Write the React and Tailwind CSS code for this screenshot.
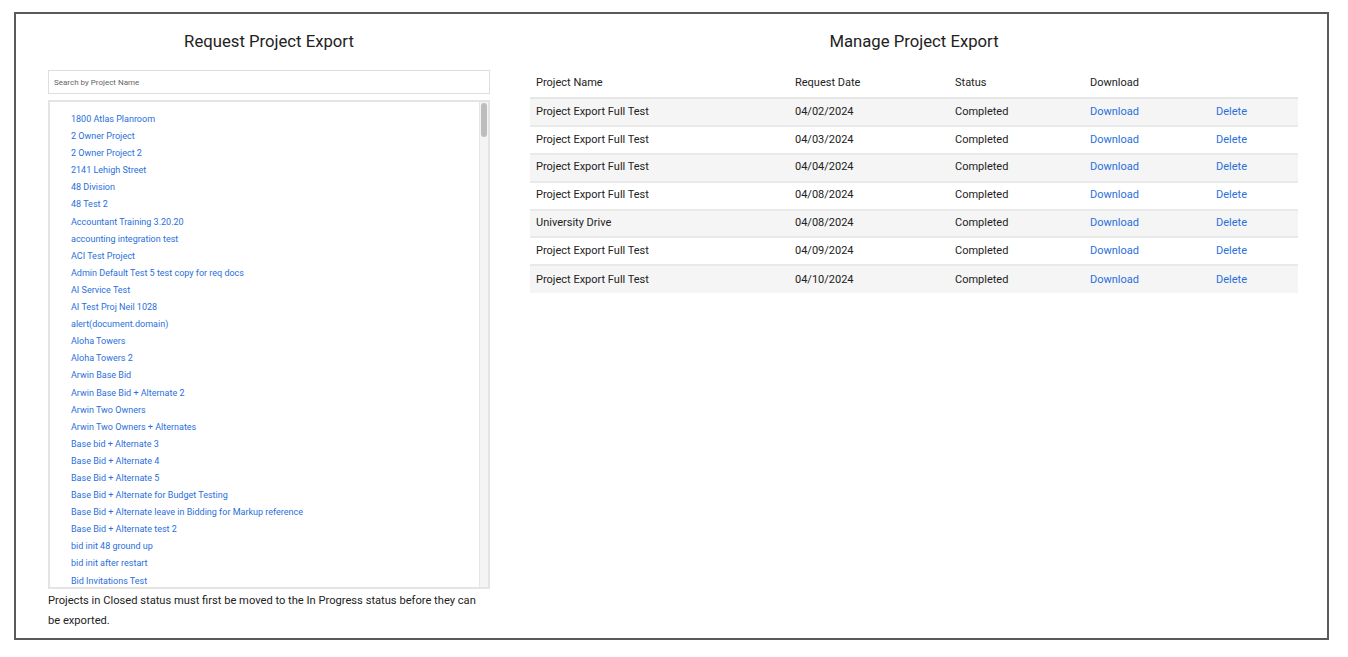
const projects = [
	'1800 Atlas Planroom',
	'2 Owner Project',
	'2 Owner Project 2',
	'2141 Lehigh Street',
	'48 Division',
	'48 Test 2',
	'Accountant Training 3.20.20',
	'accounting integration test',
	'ACI Test Project',
	'Admin Default Test 5 test copy for req docs',
	'AI Service Test',
	'AI Test Proj Neil 1028',
	'alert(document.domain)',
	'Aloha Towers',
	'Aloha Towers 2',
	'Arwin Base Bid',
	'Arwin Base Bid + Alternate 2',
	'Arwin Two Owners',
	'Arwin Two Owners + Alternates',
	'Base bid + Alternate 3',
	'Base Bid + Alternate 4',
	'Base Bid + Alternate 5',
	'Base Bid + Alternate for Budget Testing',
	'Base Bid + Alternate leave in Bidding for Markup reference',
	'Base Bid + Alternate test 2',
	'bid init 48 ground up',
	'bid init after restart',
	'Bid Invitations Test',
	'Bid Package Test',
	'Bidding Test'
];

const exportsList = [
	{ name: 'Project Export Full Test', date: '04/02/2024' },
	{ name: 'Project Export Full Test', date: '04/03/2024' },
	{ name: 'Project Export Full Test', date: '04/04/2024' },
	{ name: 'Project Export Full Test', date: '04/08/2024' },
	{ name: 'University Drive', date: '04/08/2024' },
	{ name: 'Project Export Full Test', date: '04/09/2024' },
	{ name: 'Project Export Full Test', date: '04/10/2024' }
];

function RequestExport() {
	return (
		<div className="w-[442px] shrink-0">
			<h2 className="text-center text-[16.7px] text-[#222] leading-[24px] mt-[16px] mb-[16px]">Request Project Export</h2>
			<input
				type="text"
				placeholder="Search by Project Name"
				className="block w-full h-[24px] border border-[#dedede] px-[5px] text-[8px] text-[#555] placeholder:text-[#666] outline-none"
			/>
			<div className="mt-[6px] h-[489px] border-2 border-[#e4e4e4] flex">
				<ul className="flex-1 overflow-hidden pl-[21px] pt-[9px]">
					{projects.map((p, i) => (
						<li key={i} className="text-[9px] leading-[17.1px] text-[#2a6fdb]">{p}</li>
					))}
				</ul>
				<div className="w-[9px] bg-[#f4f4f4] border-l border-[#e6e6e6] pt-[1px] flex justify-center">
					<div className="w-[6px] h-[34px] rounded-[3px] bg-[#bdbdbd]"></div>
				</div>
			</div>
			<p className="text-[11.15px] leading-[20px] text-[#222] mt-[2px] pr-[10px]">
				Projects in Closed status must first be moved to the In Progress status before they can be exported.
			</p>
		</div>
	);
}

function ManageExport() {
	return (
		<div className="w-[768px] shrink-0">
			<h2 className="text-center text-[16.7px] text-[#222] leading-[24px] mt-[16px] mb-[16px]">Manage Project Export</h2>
			<table className="w-full text-[11px] text-[#222] border-collapse">
				<thead>
					<tr className="border-b-2 border-[#e6e6e6]">
						<th className="font-normal text-left pl-[6px] h-[28px] w-[265px]">Project Name</th>
						<th className="font-normal text-left w-[160px]">Request Date</th>
						<th className="font-normal text-left w-[135px]">Status</th>
						<th className="font-normal text-left w-[126px]">Download</th>
						<th className="font-normal text-left"></th>
					</tr>
				</thead>
				<tbody>
					{exportsList.map((r, i) => (
						<tr key={i} className={(i % 2 === 0 ? 'bg-[#f5f5f5]' : 'bg-white') + (i < exportsList.length - 1 ? ' border-b-2 border-[#e9e9e9]' : '')}>
							<td className="pl-[6px] h-[27.9px]">{r.name}</td>
							<td>{r.date}</td>
							<td>Completed</td>
							<td className="text-[#2a6fdb]">Download</td>
							<td className="text-[#2a6fdb]">Delete</td>
						</tr>
					))}
				</tbody>
			</table>
		</div>
	);
}

export default function App() {
	return (
		<div className="w-[1348px] h-[657px] bg-white pt-[12px] pl-[14px]" style={{ fontFamily: 'Roboto, "Liberation Sans", sans-serif' }}>
			<div className="w-[1315px] h-[628px] border-2 border-[#5a5a5a] flex gap-[40px] pl-[32px]">
				<RequestExport />
				<ManageExport />
			</div>
		</div>
	);
}
